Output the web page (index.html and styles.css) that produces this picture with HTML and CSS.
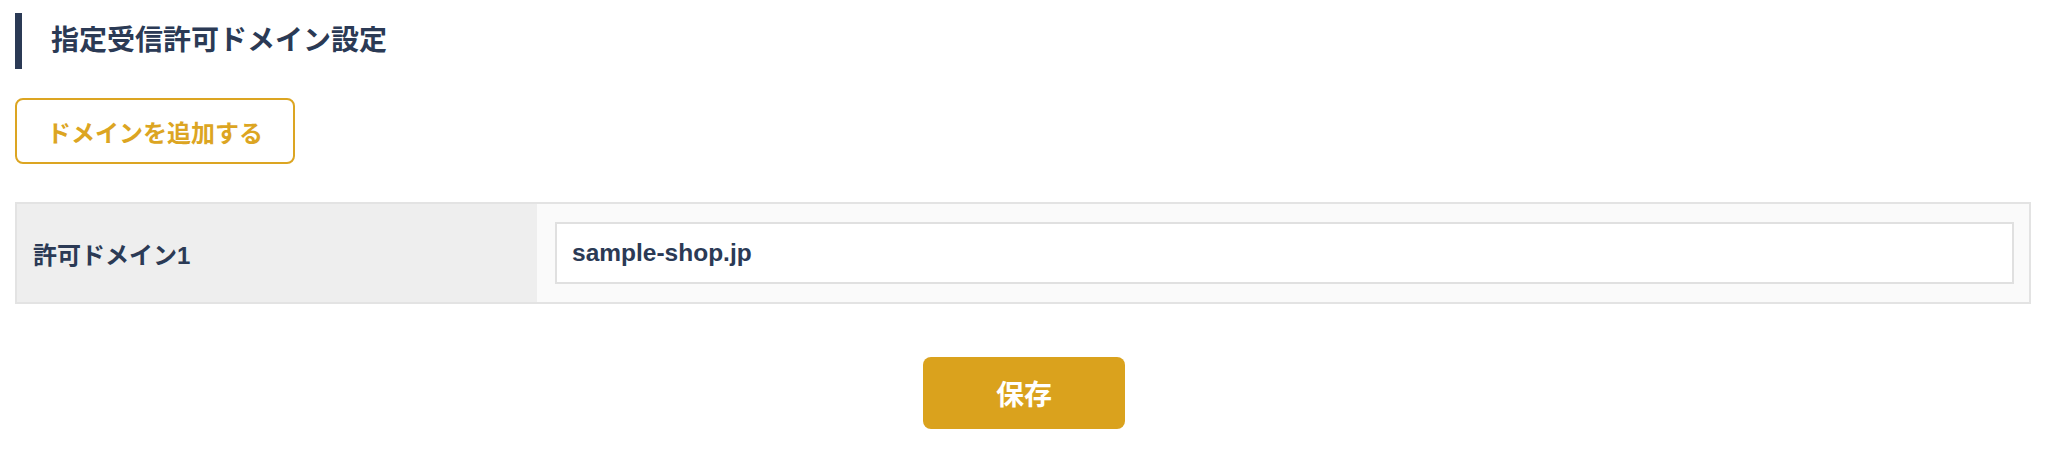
FILE: index.html
```html
<!DOCTYPE html>
<html lang="ja">
<head>
<meta charset="utf-8">
<title>指定受信許可ドメイン設定</title>
<link rel="stylesheet" href="styles.css">
</head>
<body>
<main class="page">
  <h1 class="section-title">指定受信許可ドメイン設定</h1>
  <div class="actions">
    <button class="btn-outline" type="button">ドメインを追加する</button>
  </div>
  <div class="form-table">
    <div class="form-row">
      <div class="form-label">許可ドメイン1</div>
      <div class="form-field">
        <input class="text-input" type="text" value="sample-shop.jp">
      </div>
    </div>
  </div>
  <div class="submit-row">
    <button class="btn-primary" type="button">保存</button>
  </div>
</main>
</body>
</html>
```

FILE: styles.css
```css
* { box-sizing: border-box; }
html, body { margin: 0; padding: 0; background: #ffffff; }
body {
  font-family: "Liberation Sans", "Noto Sans CJK JP", sans-serif;
  color: #2b3a55;
}
.page {
  padding: 13px 17px 0 15px;
}
.section-title {
  margin: 0;
  height: 56px;
  line-height: 56px;
  border-left: 7px solid #2b3a55;
  padding-left: 29px;
  font-size: 28px;
  font-weight: 700;
  color: #2b3a55;
}
.actions {
  margin-top: 29px;
  display: flex;
}
.btn-outline {
  font-family: inherit;
  height: 66px;
  width: 280px;
  border: 2px solid #dca522;
  border-radius: 8px;
  background: #ffffff;
  color: #dca522;
  font-size: 24px;
  font-weight: 700;
  padding: 0;
  cursor: pointer;
}
.form-table {
  margin-top: 38px;
  border: 2px solid #e3e3e3;
}
.form-row {
  display: grid;
  grid-template-columns: 520px 1fr;
}
.form-label {
  background: #eeeeee;
  display: flex;
  align-items: center;
  padding-left: 16px;
  font-size: 24px;
  font-weight: 700;
}
.form-field {
  background: #fafafa;
  padding: 18px 15px 18px 18px;
}
.text-input {
  display: block;
  width: 100%;
  height: 62px;
  border: 2px solid #e0e0e0;
  background: #ffffff;
  padding: 0 15px;
  font-family: "Liberation Sans", sans-serif;
  font-size: 24.5px;
  font-weight: 700;
  color: #2b3a55;
  outline: none;
}
.submit-row {
  margin-top: 53px;
  display: flex;
  justify-content: center;
  padding-left: 2px;
}
.btn-primary {
  font-family: inherit;
  width: 202px;
  height: 72px;
  border: none;
  border-radius: 8px;
  background: #daa21d;
  color: #ffffff;
  font-size: 28px;
  font-weight: 700;
  cursor: pointer;
}
```
